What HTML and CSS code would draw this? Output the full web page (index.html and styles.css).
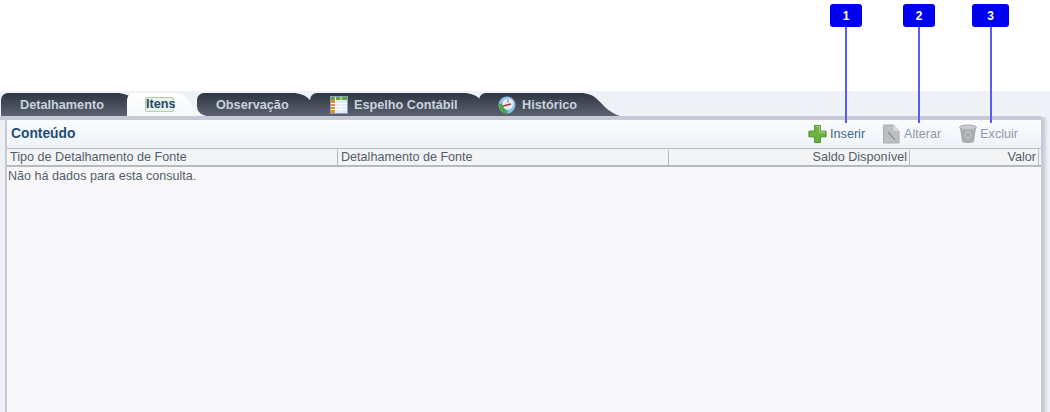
FILE: index.html
```html
<!DOCTYPE html>
<html lang="pt">
<head>
<meta charset="utf-8">
<title>Itens</title>
<link rel="stylesheet" href="styles.css">
</head>
<body>
<div class="callouts">
  <div class="callout c1"><span class="badge">1</span></div>
  <div class="callout c2"><span class="badge">2</span></div>
  <div class="callout c3"><span class="badge">3</span></div>
</div>
<main class="page">
  <nav class="tabs">
    <a class="tab t1">Detalhamento</a>
    <a class="tab t2 active"><span class="focus">Itens</span></a>
    <a class="tab t3">Observação</a>
    <a class="tab t4">
      <svg class="tabicon" viewBox="0 0 18 18" width="18" height="18"><rect x="0.5" y="0.5" width="17" height="17" fill="#dfeaf8" stroke="#8aa0b8"/><rect x="1" y="1" width="16" height="3" fill="#5fa83a"/><rect x="1" y="4" width="4" height="13" fill="#f08a24"/><path d="M1 7.5h16M1 10.5h16M1 13.5h16M5.5 1v16M11 1v16" stroke="#fff" fill="none"/></svg>
      Espelho Contábil
    </a>
    <a class="tab t5">
      <svg class="tabicon" viewBox="0 0 18 18" width="18" height="18"><circle cx="9" cy="9" r="8.5" fill="#8cc0ea"/><path d="M1 8c0 5 3 9 8 9.5l1-2-4-3-2-5z" fill="#4aa83a"/><circle cx="10" cy="8" r="5.5" fill="#e4eef8"/><path d="M5 10l8-2" stroke="#b03030" stroke-width="1.4"/><path d="M10 3v4" stroke="#7a8aa0"/></svg>
      Histórico
    </a>
  </nav>
  <section class="panel">
    <header class="panelhead">
      <h2>Conteúdo</h2>
      <div class="actions">
        <a class="action on">
          <svg viewBox="0 0 20 20" width="19" height="20"><path d="M7 1h6v6h6v6h-6v6H7v-6H1V7h6z" fill="#6fb23f" stroke="#3f8a2a"/><path d="M8 2h4v6h6" fill="none" stroke="#b3dc86"/></svg>
          Inserir
        </a>
        <a class="action">
          <svg viewBox="0 0 18 20" width="18" height="20"><path d="M0.5 1h10l5.5 6v12H0.5z" fill="#bcbec2" stroke="#aaacb0"/><path d="M10.5 1v6H16" fill="#d8d9dc"/><path d="M5 8l7 8" stroke="#8e9094" stroke-width="1.3"/></svg>
          Alterar
        </a>
        <a class="action">
          <svg viewBox="0 0 18 20" width="18" height="20"><ellipse cx="9" cy="3.5" rx="8.5" ry="2.5" fill="#c9cacc" stroke="#a8a9ac"/><path d="M1 4l2 13.5c1 2 11 2 12 0L17 4c-2 2.5-14 2.5-16 0z" fill="#a9aaad"/><circle cx="9" cy="11" r="3" fill="none" stroke="#c9cacc"/></svg>
          Excluir
        </a>
      </div>
    </header>
    <div class="grid">
      <div class="row head">
        <div class="cell c-a">Tipo de Detalhamento de Fonte</div>
        <div class="cell c-b">Detalhamento de Fonte</div>
        <div class="cell c-c num">Saldo Disponível</div>
        <div class="cell c-d num">Valor</div>
      </div>
      <div class="empty">Não há dados para esta consulta.</div>
    </div>
  </section>
</main>
</body>
</html>
```
FILE: styles.css
```css
* { box-sizing: border-box; }
html, body { margin: 0; height: 412px; overflow: hidden; background: #fff; }
body { font-family: "Liberation Sans", Arial, sans-serif; position: relative; }

.page {
  padding-top: 91px;
  height: 412px;
  display: flex;
  flex-direction: column;
  background: linear-gradient(#fff 116px, #eff0f5 116px);
}

.tabs {
  display: flex;
  height: 25px;
  padding: 2px 0 0 1px;
  background: #eef1f6;
  flex: none;
}
.tab {
  position: relative;
  height: 23px;
  display: flex;
  align-items: center;
  font-size: 12.7px;
  font-weight: bold;
  color: #c9d2de;
  background: linear-gradient(#2e3543, #5c6270);
  border-radius: 7px 0 0 0;
  white-space: nowrap;
}
.tab::after {
  content: "";
  position: absolute;
  left: 100%;
  top: 0;
  width: 40px;
  height: 23px;
  background: inherit;
  clip-path: path("M0 0 C8 0 13 2 18 7 C24 13 30 20 40 23 L0 23 Z");
}
.t1 { width: 115px; padding-left: 19px; z-index: 1; }
.t2 {
  width: 48px;
  margin-left: 11px;
  padding-left: 18px;
  z-index: 6;
  background: linear-gradient(#fff, #f5f7fa);
  color: #2a4a6a;
}
.t2::after {
  width: 30px;
  clip-path: path("M0 0 C6 0 9 2 13 7 C17 13 22 20 30 23 L0 23 Z");
}
.t3 { width: 95px; margin-left: 22px; padding-left: 19px; z-index: 3; border-radius: 7px 0 0 10px; }
.t4 { width: 153px; margin-left: 18px; padding-left: 20px; gap: 6px; z-index: 4; border-radius: 7px 0 0 5px; }
.t5 { width: 101px; margin-left: 16px; padding-left: 19px; gap: 6px; z-index: 5; border-radius: 7px 0 0 5px; }
.focus {
  border: 1px solid #b5d0a5;
  border-radius: 2px;
  background: #e9f1ea;
  width: 29px;
  line-height: 13px;
  text-align: center;
}
.tabicon { flex: none; }

.panel {
  flex: 1;
  min-height: 0;
  margin: 0 7px 0 5px;
  border: 2px solid #c5cad6;
  border-top-width: 4px;
  border-bottom: 0;
  border-top-right-radius: 4px;
  display: flex;
  flex-direction: column;
  position: relative;
}
.panel::before {
  content: "";
  position: absolute;
  left: -7px;
  top: -4px;
  width: 7px;
  height: 4px;
  background: #c5cad6;
}
.panel::after {
  content: "";
  position: absolute;
  left: calc(100% + 2px);
  top: -3px;
  bottom: 0;
  width: 5px;
  border-top-right-radius: 5px;
  background: linear-gradient(to right, #c5cad6, #eef1f6);
}

.panelhead {
  height: 28px;
  flex: none;
  display: flex;
  align-items: center;
  justify-content: space-between;
  padding: 0 23px 0 4px;
  background: linear-gradient(#fbfcfe, #eef2f8);
}
.panelhead h2 { margin: 0 0 2px; font-size: 13.8px; font-weight: bold; color: #1c4f73; }
.actions { display: flex; gap: 18px; }
.action { display: flex; align-items: center; gap: 3px; font-size: 12.6px; color: #8f98a6; line-height: 20px; }
.action.on { color: #3f6a85; }

.grid { flex: 1; display: flex; flex-direction: column; background: #f8f8fb; }
.row.head {
  display: grid;
  grid-template-columns: 331px 331px 241px 129px;
  height: 19px;
  padding-top: 1px;
  border-top: 1px solid #b5b9c0;
  border-bottom: 2px solid #b5b9c0;
  background: #f3f4f6;
}
.cell { font-size: 12.6px; line-height: 15px; padding: 0 3px; color: #555d68; border-right: 1px solid #b5b9c0; white-space: nowrap; }
.cell.num { text-align: right; padding-right: 2px; }
.empty { font-size: 12.6px; line-height: 19px; color: #555d68; padding-left: 1px; }

.callouts { position: absolute; inset: 0 0 auto 0; height: 0; z-index: 10; }
.callout { position: absolute; top: 4px; height: 119px; width: 32px; display: flex; justify-content: center; }
.callout::after {
  content: "";
  position: absolute;
  top: 23px;
  left: calc(50% - 1px);
  width: 2px;
  height: 96px;
  background: #5a5af4;
}
.c1 { left: 830px; }
.c2 { left: 903px; }
.c3 { left: 972px; width: 37px; }
.badge {
  width: 100%;
  height: 23px;
  background: #0000f0;
  border-radius: 3px;
  color: #fff;
  font-size: 12px;
  font-weight: bold;
  display: flex;
  align-items: center;
  justify-content: center;
}
```
